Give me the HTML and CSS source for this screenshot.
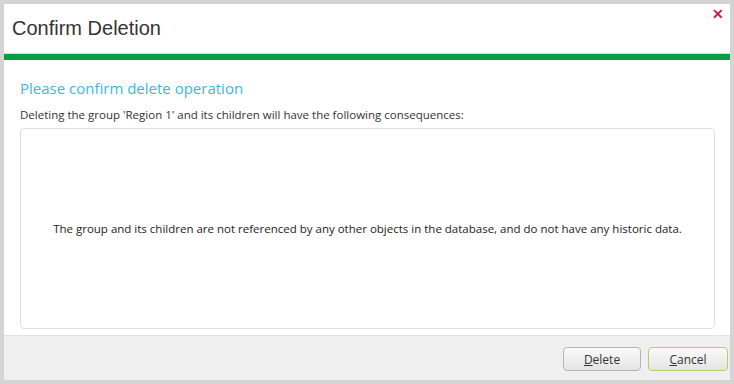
FILE: index.html
```html
<!DOCTYPE html>
<html lang="en">
<head>
    <meta charset="UTF-8">
    <title>Confirm Deletion</title>
    <link rel="stylesheet" href="styles.css">
</head>
<body>
    <div class="dialog">
        <div class="dialog-header">
            <h1 class="dialog-title">Confirm Deletion</h1>
            <span class="close-btn">&#x2715;</span>
        </div>
        <div class="header-bar"></div>

        <div class="dialog-body">
            <h2 class="subtitle">Please confirm delete operation</h2>
            <p class="description">Deleting the group 'Region 1' and its children will have the following consequences:</p>
            <div class="consequences">
                <p>The group and its children are not referenced by any other objects in the database, and do not have any historic data.</p>
            </div>
        </div>

        <div class="dialog-footer">
            <button class="btn"><u>D</u>elete</button>
            <button class="btn btn-default"><u>C</u>ancel</button>
        </div>
    </div>
</body>
</html>
```

FILE: styles.css
```css
        html, body {
            height: 100%;
        }
        body {
            margin: 0;
            padding: 4px;
            box-sizing: border-box;
            background-color: #d4d4d4;
            font-family: 'Open Sans', 'Noto Sans', sans-serif;
            color: #222;
        }
        .dialog {
            height: 100%;
            background-color: #fff;
            display: flex;
            flex-direction: column;
        }
        .dialog-header {
            height: 49px;
            display: flex;
            align-items: center;
            justify-content: space-between;
            padding: 0 0 0 8px;
            border-bottom: 1px solid #cfe8d6;
        }
        .dialog-title {
            margin: 0;
            font-family: 'Liberation Sans', Arial, sans-serif;
            font-size: 20px;
            font-weight: normal;
            color: #333;
        }
        .close-btn {
            align-self: flex-start;
            margin: 3px 6px 0 0;
            color: #c8185c;
            font-size: 14px;
            font-weight: bold;
            line-height: 14px;
        }
        .header-bar {
            height: 6px;
            background-color: #0b9d44;
        }
        .dialog-body {
            flex: 1;
            padding: 17px 15px 6px 16px;
            display: flex;
            flex-direction: column;
        }
        .subtitle {
            margin: 0;
            font-size: 15px;
            font-weight: normal;
            color: #3cb6e6;
            line-height: 22px;
        }
        .description {
            margin: 8px 0 5px;
            font-size: 11.5px;
            color: #333;
            line-height: 16px;
        }
        .consequences {
            flex: 1;
            border: 1px solid #dedede;
            border-radius: 4px;
            display: flex;
            align-items: center;
            justify-content: center;
        }
        .consequences p {
            margin: 0;
            font-size: 11.5px;
            color: #222;
        }
        .dialog-footer {
            height: 45px;
            background-color: #efefef;
            border-top: 1px solid #e2e2e2;
            display: flex;
            justify-content: flex-end;
            align-items: center;
            gap: 7px;
            padding: 2px 2px 0 0;
            box-sizing: border-box;
        }
        .btn {
            width: 78px;
            height: 24px;
            border: 1px solid #b5b5b5;
            border-radius: 4px;
            background: linear-gradient(#fafafa, #e4e4e4);
            font-family: inherit;
            font-size: 12px;
            color: #333;
            padding: 0;
        }
        .btn-default {
            width: 80px;
            border-color: #a8d46c;
        }
```
